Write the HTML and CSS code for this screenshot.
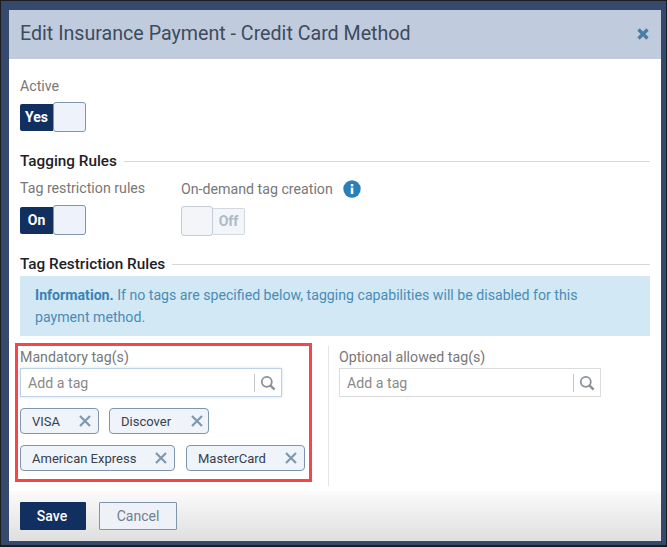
FILE: index.html
```html
<!DOCTYPE html>
<html lang="en">
<head>
<meta charset="utf-8">
<title>Edit Insurance Payment</title>
<link rel="stylesheet" href="styles.css">
</head>
<body>
<div class="modal">
  <header class="modal-head">
    <h1>Edit Insurance Payment - Credit Card Method</h1>
    <svg class="close" width="14" height="14" viewBox="0 0 14 14"><path d="M2.5 2.5l9 9M11.5 2.5l-9 9" stroke="#4a7da3" stroke-width="3.2" fill="none"/></svg>
  </header>
  <div class="modal-body">
    <div class="label">Active</div>
    <div class="toggle"><span class="on-side">Yes</span><span class="knob"></span></div>

    <div class="section s-tagging"><h2>Tagging Rules</h2><span class="rule"></span></div>
    <div class="switches">
      <div class="sw-a">
        <div class="label">Tag restriction rules</div>
        <div class="toggle"><span class="on-side">On</span><span class="knob"></span></div>
      </div>
      <div class="sw-b">
        <div class="label">On-demand tag creation
          <svg class="info" width="18" height="18" viewBox="0 0 18 18"><circle cx="9" cy="9" r="8.7" fill="#2a7fb8"/><rect x="7.8" y="7.6" width="2.5" height="6.4" fill="#fff"/><rect x="7.8" y="4" width="2.5" height="2.4" fill="#fff"/></svg>
        </div>
        <div class="toggle disabled"><span class="knob"></span><span class="off-side">Off</span></div>
      </div>
    </div>

    <div class="section s-restrict"><h2>Tag Restriction Rules</h2><span class="rule"></span></div>
    <div class="alert"><b>Information.</b> If no tags are specified below, tagging capabilities will be disabled for this payment method.</div>

    <div class="cols">
      <div class="col-left">
        <div class="label">Mandatory tag(s)</div>
        <div class="input focused">
          <span class="ph">Add a tag</span>
          <span class="search"><svg width="16" height="16" viewBox="0 0 16 16"><circle cx="6.8" cy="6.8" r="5" fill="none" stroke="#8a9197" stroke-width="1.8"/><path d="M10.6 10.6l4 4" stroke="#8a9197" stroke-width="2.4"/></svg></span>
        </div>
        <div class="tags">
          <div class="tag t-visa"><span>VISA</span><svg class="x" width="12" height="12" viewBox="0 0 12 12"><path d="M1 1l10 10M11 1L1 11" stroke="#7f98ae" stroke-width="2.2"/></svg></div>
          <div class="tag t-disc"><span>Discover</span><svg class="x" width="12" height="12" viewBox="0 0 12 12"><path d="M1 1l10 10M11 1L1 11" stroke="#7f98ae" stroke-width="2.2"/></svg></div>
          <div class="tag t-amex"><span>American Express</span><svg class="x" width="12" height="12" viewBox="0 0 12 12"><path d="M1 1l10 10M11 1L1 11" stroke="#7f98ae" stroke-width="2.2"/></svg></div>
          <div class="tag t-mc"><span>MasterCard</span><svg class="x" width="12" height="12" viewBox="0 0 12 12"><path d="M1 1l10 10M11 1L1 11" stroke="#7f98ae" stroke-width="2.2"/></svg></div>
        </div>
      </div>
      <div class="col-right">
        <div class="label">Optional allowed tag(s)</div>
        <div class="input">
          <span class="ph">Add a tag</span>
          <span class="search"><svg width="16" height="16" viewBox="0 0 16 16"><circle cx="6.8" cy="6.8" r="5" fill="none" stroke="#8a9197" stroke-width="1.8"/><path d="M10.6 10.6l4 4" stroke="#8a9197" stroke-width="2.4"/></svg></span>
        </div>
      </div>
      <div class="highlight"></div>
    </div>
  </div>
  <footer class="modal-foot">
    <button class="btn btn-save">Save</button>
    <button class="btn btn-cancel">Cancel</button>
  </footer>
</div>
</body>
</html>
```
FILE: styles.css
```css
* { box-sizing: border-box; }
html, body { margin: 0; height: 100%; }
body {
  width: 667px;
  height: 547px;
  overflow: hidden;
  background: #34496b;
  border: 1px solid #1c1c1e;
  border-width: 1px 1px 2px 1px;
  padding: 9px 5px 4px 8px;
  font-family: Roboto, "Liberation Sans", sans-serif;
  color: #777;
}
.modal {
  width: 652px;
  height: 531px;
  background: #fff;
  display: flex;
  flex-direction: column;
}
.modal-head {
  height: 49px;
  flex: none;
  background: #c0cbdd;
  display: flex;
  align-items: center;
  justify-content: space-between;
  padding: 0 11px 3px 11px;
}
.modal-head h1 {
  margin: 0;
  font-size: 19.65px;
  font-weight: 400;
  color: #3d4b5e;
}
.close { display: block; margin-top: 1px; }
.modal-body {
  flex: 1;
  padding: 18px 11px 0;
  min-height: 0;
}
.label {
  font-size: 14.2px;
  line-height: 18px;
  color: #787878;
  display: flex;
  align-items: center;
}
.toggle {
  width: 66px;
  height: 30px;
  margin-top: 7px;
  display: flex;
  align-items: center;
}
.switches .toggle { margin-top: 8px; }
.on-side {
  width: 33px;
  height: 27px;
  background: #12305f;
  color: #fff;
  font-size: 14px;
  font-weight: 700;
  border-radius: 2px 0 0 2px;
  display: flex;
  align-items: center;
  justify-content: center;
}
.knob {
  width: 33px;
  height: 30px;
  background: #eef3fb;
  border: 1px solid #7f95ad;
  border-radius: 3px;
  flex: none;
}
.toggle.disabled { width: 64px; }
.toggle.disabled .knob { width: 32px; background: #f3f5f9; border-color: #c4ccd6; }
.off-side {
  width: 32px;
  height: 27px;
  background: #f2f5f9;
  border: 1px solid #d2d9e1;
  border-left: 0;
  border-radius: 0 2px 2px 0;
  color: #b0bac6;
  font-size: 14px;
  font-weight: 700;
  display: flex;
  align-items: center;
  justify-content: center;
}
.section {
  display: flex;
  align-items: center;
  gap: 7px;
}
.section h2 {
  margin: 0;
  font-size: 15.3px;
  line-height: 20px;
  font-weight: 500;
  color: #1e2126;
}
.rule { flex: 1; height: 1px; background: #d8d8d8; }
.s-tagging { margin-top: 19px; }
.switches { display: flex; margin-top: 8px; }
.sw-a { width: 161px; }
.info { margin-left: 10px; margin-top: 1px; }
.s-restrict { margin-top: 18px; }
.alert {
  margin-top: 2px;
  height: 60px;
  background: #d2e8f4;
  padding: 8px 60px 8px 15px;
  font-size: 14.15px;
  line-height: 22px;
  color: #4a8cb8;
}
.alert b { color: #3a82b4; font-weight: 700; }
.cols {
  position: relative;
  display: flex;
  margin-top: 10px;
  height: 140px;
}
.col-left {
  width: 309px;
  border-right: 1px solid #e4e4e4;
  padding-top: 2px;
}
.col-right { padding: 2px 0 0 10px; }
.input {
  width: 262px;
  height: 29px;
  margin-top: 2px;
  border: 1px solid #dcdcdc;
  background: #fff;
  display: flex;
  align-items: center;
  justify-content: space-between;
}
.input.focused { border-color: #bcd0e8; box-shadow: 0 0 3px #cfdff0; }
.ph { padding-left: 7px; font-size: 14.2px; color: #8a8a8a; }
.search {
  width: 27px;
  height: 18px;
  border-left: 1px solid #c8c8c8;
  display: flex;
  align-items: center;
  justify-content: center;
}
.tags {
  display: flex;
  flex-wrap: wrap;
  margin-top: 11px;
  column-gap: 10px;
  row-gap: 11px;
  width: 290px;
}
.tag {
  height: 26px;
  background: #eff3fa;
  border: 1px solid #7f95ad;
  border-radius: 4px;
  display: flex;
  align-items: center;
  justify-content: space-between;
  padding: 0 7px 0 11px;
  font-size: 13px;
  color: #37404c;
}
.t-visa { width: 79px; }
.t-disc { width: 100px; padding-right: 5px; }
.t-amex { width: 155px; }
.t-mc { width: 119px; margin-left: 1px; }
.highlight {
  position: absolute;
  left: -5px;
  top: -3px;
  width: 297px;
  height: 139px;
  border: 3px solid #f7454c;
  pointer-events: none;
}
.modal-foot {
  height: 50px;
  flex: none;
  background: linear-gradient(#fbfbfb, #dfdfdf);
  padding: 11px 11px 0;
  display: flex;
  align-items: flex-start;
  gap: 13px;
}
.btn {
  height: 28px;
  font-family: inherit;
  font-size: 14px;
  border-radius: 1px;
  padding: 0;
}
.btn-save {
  width: 66px;
  background: #12305f;
  border: 0;
  color: #fff;
  font-weight: 500;
  padding-right: 2px;
}
.btn-cancel {
  width: 78px;
  background: #eef2f8;
  border: 1px solid #7f95ad;
  color: #6f7e8e;
}
```
